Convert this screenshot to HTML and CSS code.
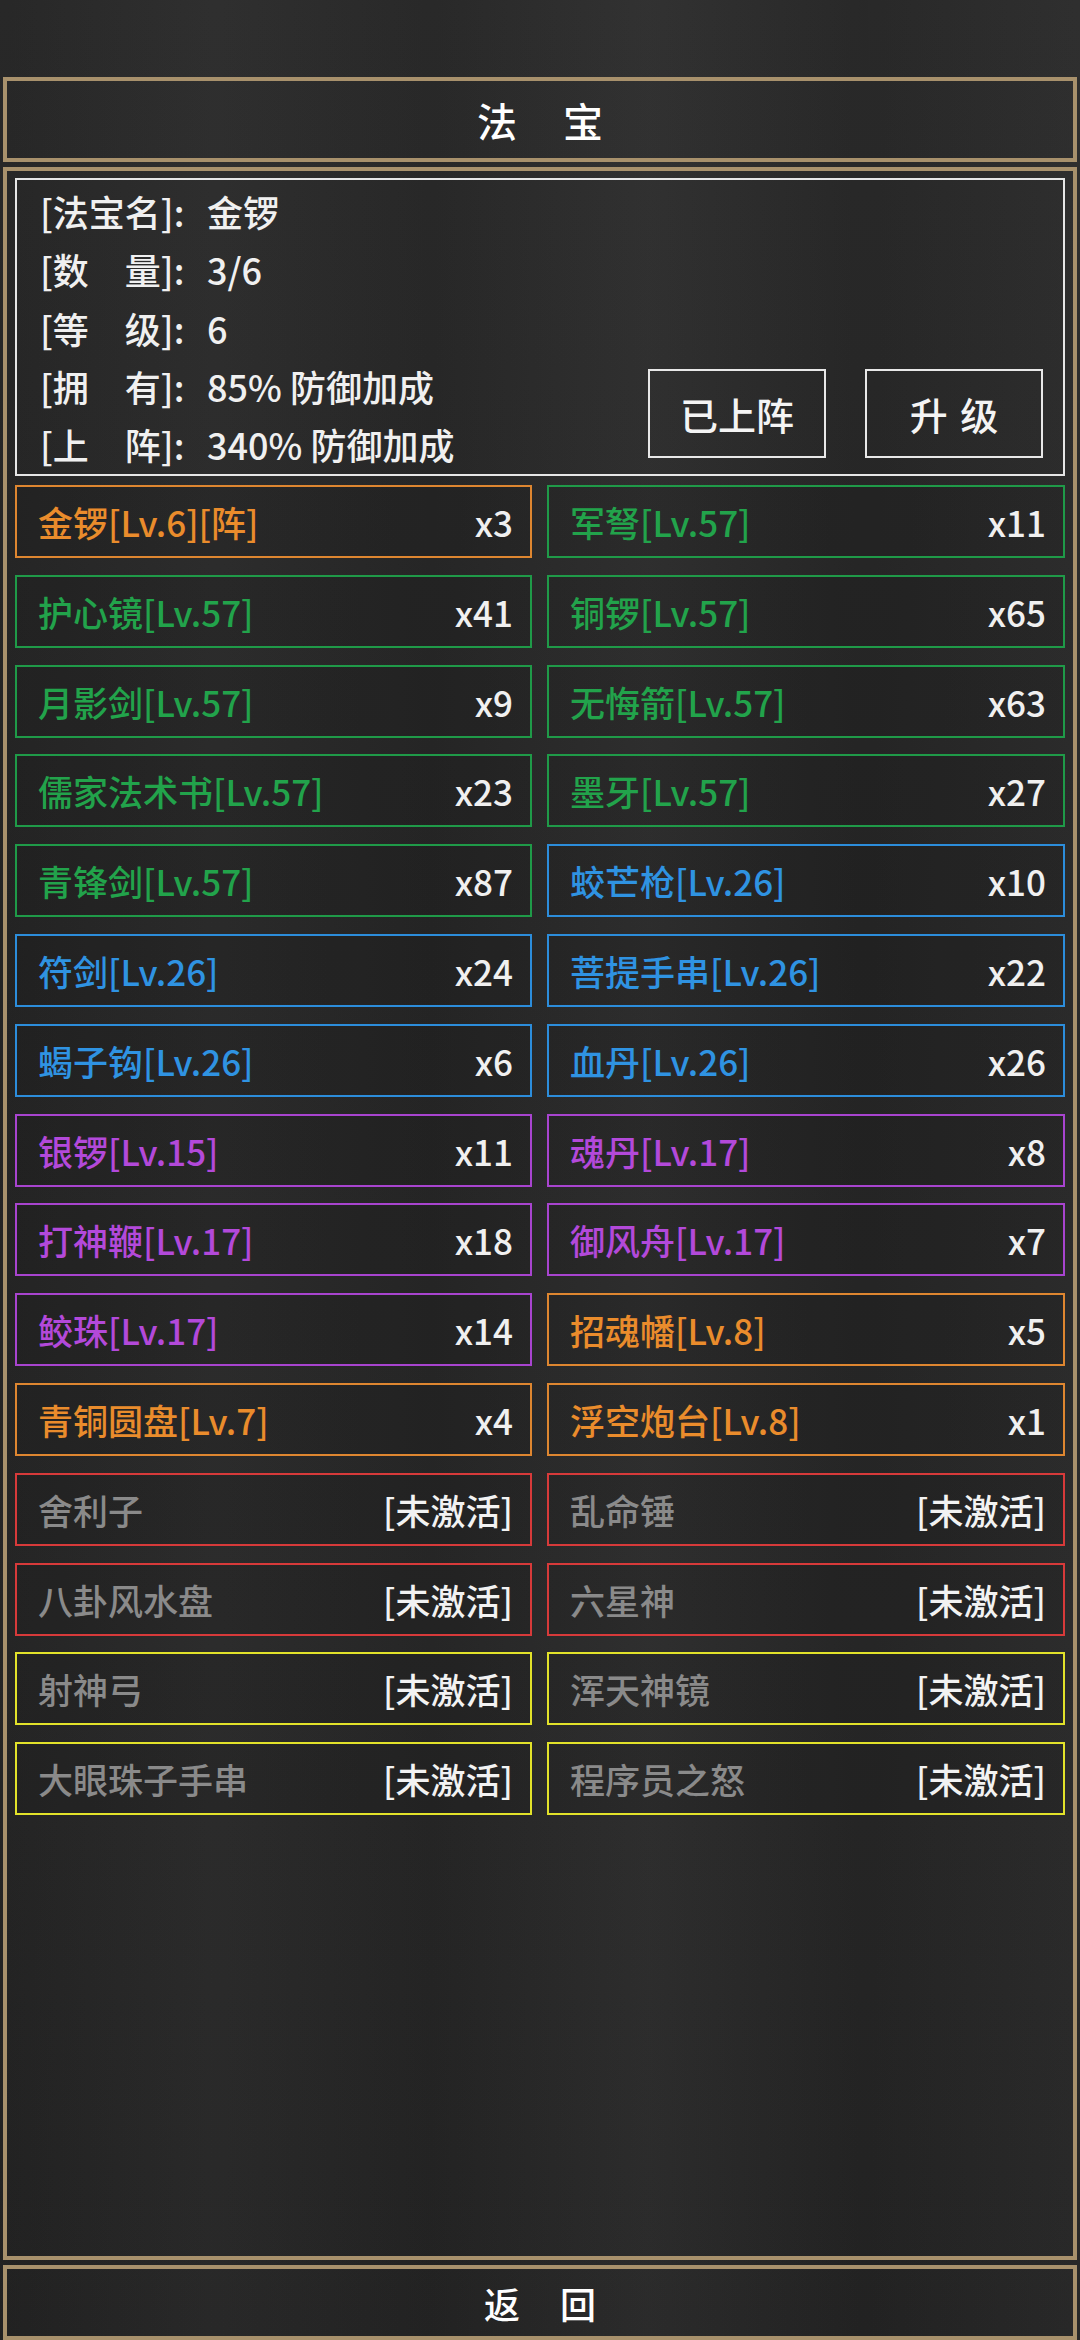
FILE: index.html
```html
<!DOCTYPE html>
<html lang="zh-CN">
<head>
<meta charset="utf-8">
<title>法宝</title>
<link rel="stylesheet" href="styles.css">
</head>
<body>
<div class="screen">
  <header class="frame title-bar"><span class="title-text">法宝</span></header>
  <main class="frame main-panel">
    <section class="info">
      <div class="info-lines">
        <div class="line"><span class="k">[法宝名]:</span><span class="v">金锣</span></div>
        <div class="line"><span class="k">[数　量]:</span><span class="v">3/6</span></div>
        <div class="line"><span class="k">[等　级]:</span><span class="v">6</span></div>
        <div class="line"><span class="k">[拥　有]:</span><span class="v">85% 防御加成</span></div>
        <div class="line"><span class="k">[上　阵]:</span><span class="v">340% 防御加成</span></div>
      </div>
      <div class="actions">
        <div class="btn">已上阵</div>
        <div class="btn btn-spaced">升 级</div>
      </div>
    </section>
    <section class="grid">
      <div class="item orange"><span class="name">金锣[Lv.6][阵]</span><span class="cnt">x3</span></div>
      <div class="item green"><span class="name">军弩[Lv.57]</span><span class="cnt">x11</span></div>
      <div class="item green"><span class="name">护心镜[Lv.57]</span><span class="cnt">x41</span></div>
      <div class="item green"><span class="name">铜锣[Lv.57]</span><span class="cnt">x65</span></div>
      <div class="item green"><span class="name">月影剑[Lv.57]</span><span class="cnt">x9</span></div>
      <div class="item green"><span class="name">无悔箭[Lv.57]</span><span class="cnt">x63</span></div>
      <div class="item green"><span class="name">儒家法术书[Lv.57]</span><span class="cnt">x23</span></div>
      <div class="item green"><span class="name">墨牙[Lv.57]</span><span class="cnt">x27</span></div>
      <div class="item green"><span class="name">青锋剑[Lv.57]</span><span class="cnt">x87</span></div>
      <div class="item blue"><span class="name">蛟芒枪[Lv.26]</span><span class="cnt">x10</span></div>
      <div class="item blue"><span class="name">符剑[Lv.26]</span><span class="cnt">x24</span></div>
      <div class="item blue"><span class="name">菩提手串[Lv.26]</span><span class="cnt">x22</span></div>
      <div class="item blue"><span class="name">蝎子钩[Lv.26]</span><span class="cnt">x6</span></div>
      <div class="item blue"><span class="name">血丹[Lv.26]</span><span class="cnt">x26</span></div>
      <div class="item purple"><span class="name">银锣[Lv.15]</span><span class="cnt">x11</span></div>
      <div class="item purple"><span class="name">魂丹[Lv.17]</span><span class="cnt">x8</span></div>
      <div class="item purple"><span class="name">打神鞭[Lv.17]</span><span class="cnt">x18</span></div>
      <div class="item purple"><span class="name">御风舟[Lv.17]</span><span class="cnt">x7</span></div>
      <div class="item purple"><span class="name">鲛珠[Lv.17]</span><span class="cnt">x14</span></div>
      <div class="item orange"><span class="name">招魂幡[Lv.8]</span><span class="cnt">x5</span></div>
      <div class="item orange"><span class="name">青铜圆盘[Lv.7]</span><span class="cnt">x4</span></div>
      <div class="item orange"><span class="name">浮空炮台[Lv.8]</span><span class="cnt">x1</span></div>
      <div class="item red locked"><span class="name">舍利子</span><span class="cnt">[未激活]</span></div>
      <div class="item red locked"><span class="name">乱命锤</span><span class="cnt">[未激活]</span></div>
      <div class="item red locked"><span class="name">八卦风水盘</span><span class="cnt">[未激活]</span></div>
      <div class="item red locked"><span class="name">六星神</span><span class="cnt">[未激活]</span></div>
      <div class="item yellow locked"><span class="name">射神弓</span><span class="cnt">[未激活]</span></div>
      <div class="item yellow locked"><span class="name">浑天神镜</span><span class="cnt">[未激活]</span></div>
      <div class="item yellow locked"><span class="name">大眼珠子手串</span><span class="cnt">[未激活]</span></div>
      <div class="item yellow locked"><span class="name">程序员之怒</span><span class="cnt">[未激活]</span></div>
    </section>
  </main>
  <footer class="frame bottom-bar"><span class="back-text">返回</span></footer>
</div>
</body>
</html>
```
FILE: styles.css
```css
html, body {
  margin: 0;
  padding: 0;
}
body {
  width: 1080px;
  height: 2340px;
  overflow: hidden;
  background-color: #272727;
  background-image:
    linear-gradient(90deg, rgba(0,0,0,0.08) 0%, rgba(255,255,255,0.02) 20%, rgba(0,0,0,0.05) 40%, rgba(255,255,255,0.03) 60%, rgba(0,0,0,0.06) 80%, rgba(255,255,255,0.02) 100%),
    linear-gradient(180deg, #2b2b2b 0%, #262626 40%, #282828 70%, #242424 100%);
  font-family: "Noto Sans CJK SC", "Noto Sans", sans-serif;
  font-weight: 500;
  color: #ececec;
}
.screen {
  box-sizing: border-box;
  height: 2340px;
  padding: 77px 3px 0 3px;
  display: flex;
  flex-direction: column;
  gap: 5px;
}
.frame {
  box-sizing: border-box;
  border: 4px solid #a8916c;
}
.title-bar {
  height: 85px;
  display: flex;
  align-items: center;
  justify-content: center;
}
.title-text {
  font-size: 40px;
  letter-spacing: 46px;
  margin-right: -46px;
  color: #ffffff;
  line-height: 1;
}
.main-panel {
  height: 2093px;
  padding: 7px 8px 0 8px;
}
.info {
  box-sizing: border-box;
  height: 298px;
  border: 2px solid #e6e6e6;
  display: flex;
  justify-content: space-between;
  padding: 2px 20px 16px 23px;
}
.info-lines {
  font-size: 36px;
  line-height: 58.3px;
  color: #f0f0f0;
}
.line {
  white-space: nowrap;
}
.k {
  display: inline-block;
  width: 167px;
}
.actions {
  align-self: flex-end;
  display: flex;
  gap: 39px;
}
.btn {
  box-sizing: border-box;
  width: 178px;
  height: 89px;
  border: 2px solid #e8e8e8;
  display: flex;
  align-items: center;
  justify-content: center;
  font-size: 38px;
  color: #f4f4f4;
}
.btn-spaced {
  word-spacing: 4px;
}
.grid {
  margin-top: 9px;
  display: grid;
  grid-template-columns: 517px 518px;
  column-gap: 15px;
  grid-auto-rows: 73px;
  row-gap: 16.8px;
}
.item {
  box-sizing: border-box;
  border: 2px solid;
  display: flex;
  align-items: center;
  justify-content: space-between;
  padding: 0 17px 0 21px;
  font-size: 35px;
  white-space: nowrap;
  background: rgba(0,0,0,0.08);
}
.cnt {
  color: #f0f0f0;
}
.orange { border-color: #de8630; color: #ea8c2c; }
.green { border-color: #1f9a48; color: #22a34b; }
.blue { border-color: #2c8ddb; color: #2f93e2; }
.purple { border-color: #a844cf; color: #b349da; }
.red { border-color: #d73a3a; }
.yellow { border-color: #e2e22a; }
.locked .name { color: #8a8a8a; }
.locked .cnt { color: #f2f2f2; }
.bottom-bar {
  height: 75px;
  display: flex;
  align-items: center;
  justify-content: center;
}
.back-text {
  font-size: 36px;
  letter-spacing: 40px;
  margin-right: -40px;
  color: #ffffff;
  line-height: 1;
}
```
